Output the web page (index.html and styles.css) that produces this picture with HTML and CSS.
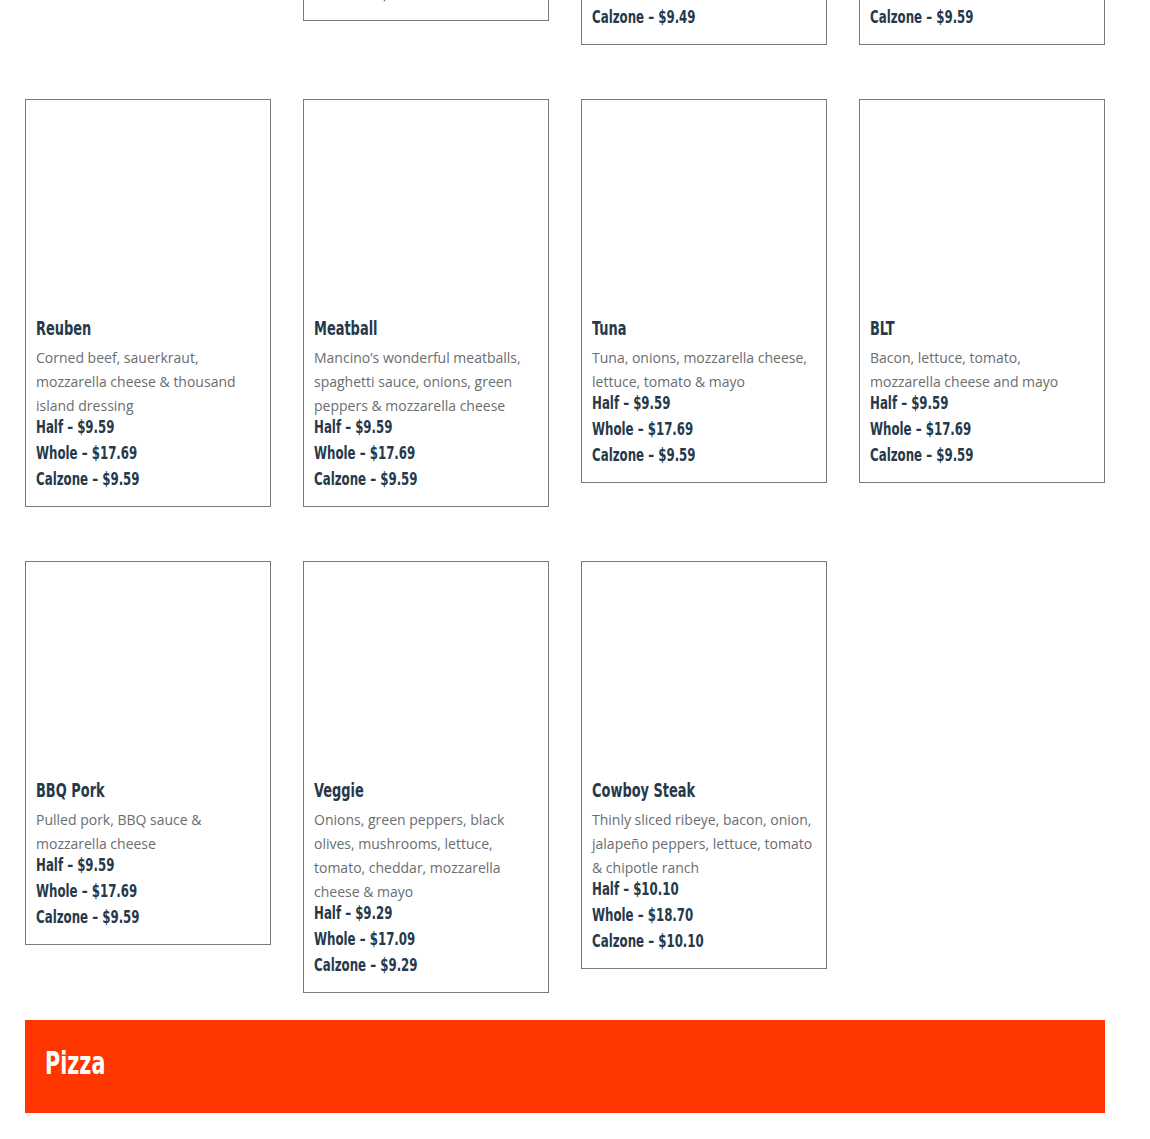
FILE: index.html
```html
<!DOCTYPE html>
<html lang="en">
<head>
<meta charset="utf-8">
<title>Menu</title>
<link rel="stylesheet" href="styles.css">
</head>
<body>
<main class="page">
  <section class="grid">
    <article class="card">
      <div class="card-img"></div>
      <h3 class="title"><span class="fit">Italian</span></h3>
      <p class="desc">Ham, salami &amp; provolone</p>
      <div class="prices"><p><span class="fitp">Half – $9.59</span></p><p><span class="fitp">Whole – $17.69</span></p></div>
    </article>
    <article class="card">
      <div class="card-img"></div>
      <h3 class="title"><span class="fit">Ham</span></h3>
      <p class="desc">Ham, mozzarella cheese</p>
      <div class="prices"><p><span class="fitp">Half – $9.49</span></p><p><span class="fitp">Whole – $17.49</span></p><p><span class="fitp">Calzone – $9.49</span></p></div>
    </article>
    <article class="card">
      <div class="card-img"></div>
      <h3 class="title"><span class="fit">Turkey</span></h3>
      <p class="desc">Turkey, mozzarella cheese, lettuce, tomato &amp; mayo</p>
      <div class="prices"><p><span class="fitp">Half – $9.49</span></p><p><span class="fitp">Whole – $17.49</span></p><p><span class="fitp">Calzone – $9.49</span></p></div>
    </article>
    <article class="card">
      <div class="card-img"></div>
      <h3 class="title"><span class="fit">Club</span></h3>
      <p class="desc">Ham, turkey, bacon, mozzarella cheese &amp; mayo</p>
      <div class="prices"><p><span class="fitp">Half – $9.59</span></p><p><span class="fitp">Whole – $17.69</span></p><p><span class="fitp">Calzone – $9.59</span></p></div>
    </article>

    <article class="card">
      <div class="card-img"></div>
      <h3 class="title"><span class="fit">Reuben</span></h3>
      <p class="desc">Corned beef, sauerkraut, mozzarella cheese &amp; thousand island dressing</p>
      <div class="prices"><p><span class="fitp">Half – $9.59</span></p><p><span class="fitp">Whole – $17.69</span></p><p><span class="fitp">Calzone – $9.59</span></p></div>
    </article>
    <article class="card">
      <div class="card-img"></div>
      <h3 class="title"><span class="fit">Meatball</span></h3>
      <p class="desc">Mancino’s wonderful meatballs, spaghetti sauce, onions, green peppers &amp; mozzarella cheese</p>
      <div class="prices"><p><span class="fitp">Half – $9.59</span></p><p><span class="fitp">Whole – $17.69</span></p><p><span class="fitp">Calzone – $9.59</span></p></div>
    </article>
    <article class="card">
      <div class="card-img"></div>
      <h3 class="title"><span class="fit">Tuna</span></h3>
      <p class="desc">Tuna, onions, mozzarella cheese, lettuce, tomato &amp; mayo</p>
      <div class="prices"><p><span class="fitp">Half – $9.59</span></p><p><span class="fitp">Whole – $17.69</span></p><p><span class="fitp">Calzone – $9.59</span></p></div>
    </article>
    <article class="card">
      <div class="card-img"></div>
      <h3 class="title"><span class="fit">BLT</span></h3>
      <p class="desc">Bacon, lettuce, tomato, mozzarella cheese and mayo</p>
      <div class="prices"><p><span class="fitp">Half – $9.59</span></p><p><span class="fitp">Whole – $17.69</span></p><p><span class="fitp">Calzone – $9.59</span></p></div>
    </article>

    <article class="card">
      <div class="card-img"></div>
      <h3 class="title"><span class="fit">BBQ Pork</span></h3>
      <p class="desc">Pulled pork, BBQ sauce &amp; mozzarella cheese</p>
      <div class="prices"><p><span class="fitp">Half – $9.59</span></p><p><span class="fitp">Whole – $17.69</span></p><p><span class="fitp">Calzone – $9.59</span></p></div>
    </article>
    <article class="card">
      <div class="card-img"></div>
      <h3 class="title"><span class="fit">Veggie</span></h3>
      <p class="desc">Onions, green peppers, black olives, mushrooms, lettuce, tomato, cheddar, mozzarella cheese &amp; mayo</p>
      <div class="prices"><p><span class="fitp">Half – $9.29</span></p><p><span class="fitp">Whole – $17.09</span></p><p><span class="fitp">Calzone – $9.29</span></p></div>
    </article>
    <article class="card">
      <div class="card-img"></div>
      <h3 class="title"><span class="fit">Cowboy Steak</span></h3>
      <p class="desc">Thinly sliced ribeye, bacon, onion, jalapeño peppers, lettuce, tomato &amp; chipotle ranch</p>
      <div class="prices"><p><span class="fitp">Half – $10.10</span></p><p><span class="fitp">Whole – $18.70</span></p><p><span class="fitp">Calzone – $10.10</span></p></div>
    </article>
  </section>

  <header class="section-bar">
    <h2 class="section-title"><span class="fit">Pizza</span></h2>
  </header>
</main>
</body>
</html>
```

FILE: styles.css
```css
html, body {
  margin: 0;
  padding: 0;
  background: #ffffff;
}

body {
  font-family: "Open Sans", "Lato", sans-serif;
  color: #26394b;
}

.page {
  width: 1080px;
  margin: -339px 0 0 25px;
  padding-bottom: 200px;
}

.grid {
  display: grid;
  grid-template-columns: repeat(4, 246px);
  column-gap: 32px;
  row-gap: 54px;
  align-items: start;
}

.card {
  border: 1px solid #7a7a7a;
  padding: 10px 10px 14px;
}

.card-img {
  height: 206px;
}

.fit,
.fitp {
  display: inline-block;
  transform-origin: left center;
  white-space: nowrap;
}

.fit {
  transform: scaleX(0.72);
}

.fitp {
  transform: scaleX(0.75);
}

.title {
  margin: 0;
  font-family: "DejaVu Sans", sans-serif;
  font-stretch: condensed;
  font-weight: 700;
  font-size: 20px;
  line-height: 24px;
  color: #26394b;
}

.desc {
  margin: 6px 0 0;
  font-size: 14px;
  line-height: 24px;
  color: #6a6d70;
}

.prices {
  margin-top: -4px;
}

.prices p {
  margin: 0;
  font-family: "DejaVu Sans", sans-serif;
  font-stretch: condensed;
  font-weight: 700;
  font-size: 17.5px;
  line-height: 26px;
  color: #26394b;
}

.section-bar {
  margin-top: 27px;
  height: 93px;
  background: #ff3600;
  display: flex;
  align-items: center;
  padding: 0 20px 8px;
  box-sizing: border-box;
}

.section-title {
  margin: 0;
  font-family: "DejaVu Sans", sans-serif;
  font-stretch: condensed;
  font-weight: 700;
  font-size: 32px;
  line-height: 40px;
  color: #ffffff;
}
```
